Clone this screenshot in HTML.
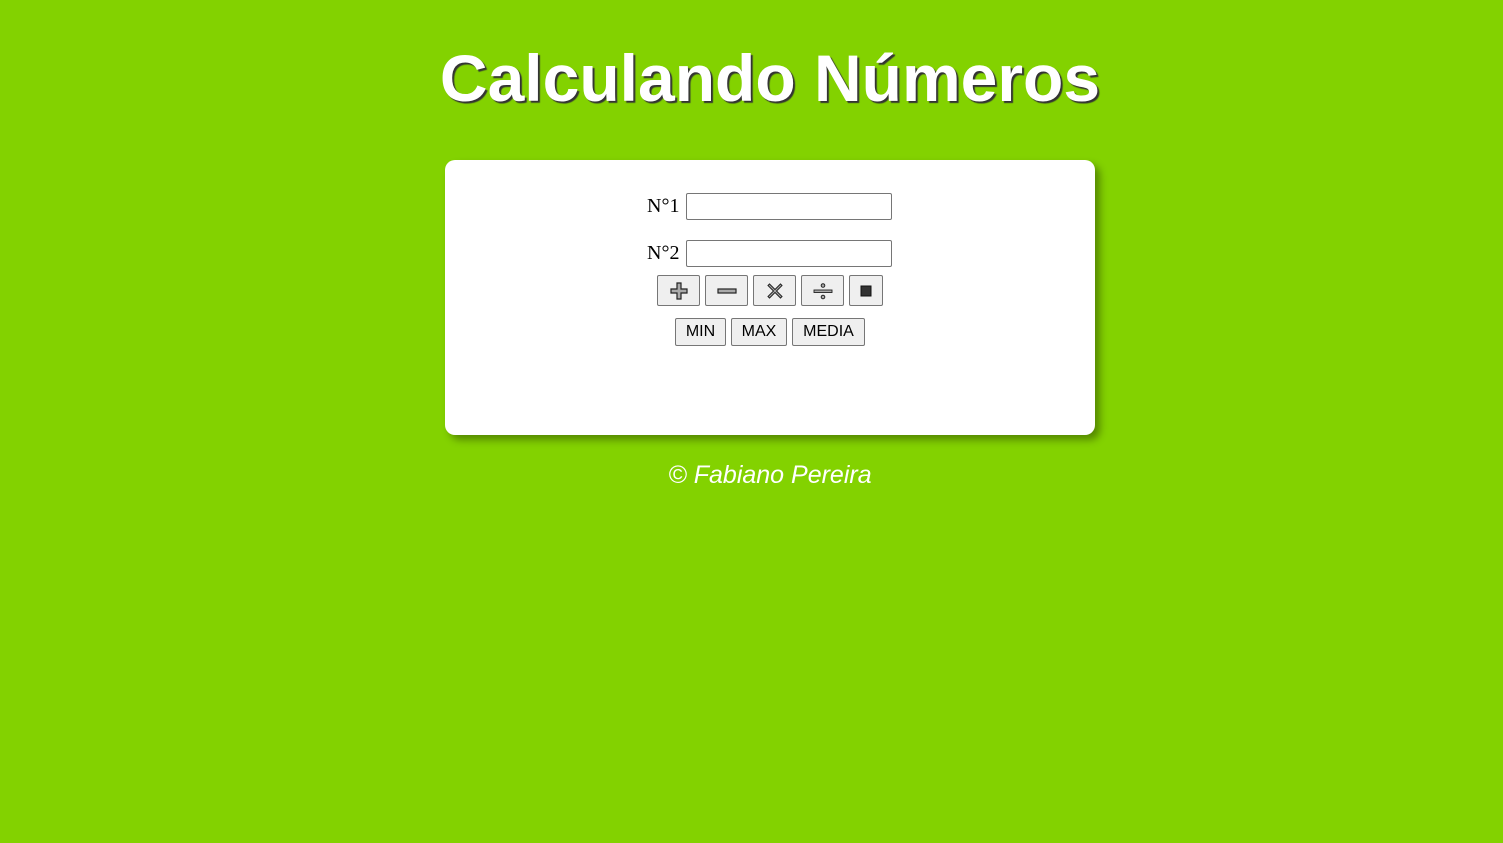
<!DOCTYPE html>
<html><head><meta charset="utf-8"><style>
body{margin:0;background:#83d200;width:1503px;height:843px;overflow:hidden;position:relative;font-family:"Liberation Sans",Arial,sans-serif}
h1{position:absolute;top:38px;left:0;width:1540px;margin:0;text-align:center;color:#fff;font-size:66px;font-weight:bold;text-shadow:2px 2px 1px #333;line-height:80px}
.card{position:absolute;left:445px;top:160px;width:650px;height:275px;background:#fff;border-radius:10px;box-shadow:5px 5px 8px rgba(0,0,0,.35)}
.lbl{position:absolute;font-family:"Liberation Serif",serif;font-size:20px;color:#000}
.inp{position:absolute;width:206px;height:27px;border:1px solid #767676;border-radius:2px;box-sizing:border-box;background:#fff}
.b{position:absolute;box-sizing:border-box;border:1px solid #767676;border-radius:2px;background:#efefef;font-size:16px;color:#000;text-align:center;display:flex;align-items:center;justify-content:center}
.foot{position:absolute;top:461px;left:0;width:1540px;text-align:center;color:#fff;font-style:italic;font-size:25px}
</style></head><body>
<h1>Calculando Números</h1>
<div class="card"></div>
<div class="lbl" style="left:647px;top:195px">N°1</div>
<div class="inp" style="left:686px;top:193px"></div>
<div class="lbl" style="left:647px;top:242px">N°2</div>
<div class="inp" style="left:686px;top:240px"></div>
<div class="b" style="left:657px;top:275px;width:43px;height:31px"><svg width="22" height="22" viewBox="0 0 22 22"><path d="M9 3h4v6h6v4h-6v6h-4v-6h-6v-4h6z" fill="#aaa" stroke="#222" stroke-width="1.2"/></svg></div>
<div class="b" style="left:705px;top:275px;width:43px;height:31px"><svg width="22" height="22" viewBox="0 0 22 22"><rect x="2" y="9" width="18" height="4" fill="#aaa" stroke="#222" stroke-width="1.2"/></svg></div>
<div class="b" style="left:753px;top:275px;width:43px;height:31px"><svg width="22" height="22" viewBox="0 0 22 22"><path d="M4 5.5l1.5-1.5 5.5 5.5 5.5-5.5 1.5 1.5-5.5 5.5 5.5 5.5-1.5 1.5-5.5-5.5-5.5 5.5-1.5-1.5 5.5-5.5z" fill="#aaa" stroke="#222" stroke-width="1"/></svg></div>
<div class="b" style="left:801px;top:275px;width:43px;height:31px"><svg width="22" height="22" viewBox="0 0 22 22"><rect x="2" y="10" width="18" height="2.5" fill="#aaa" stroke="#222" stroke-width="0.9"/><circle cx="11" cy="5.5" r="1.8" fill="#aaa" stroke="#222"/><circle cx="11" cy="17" r="1.8" fill="#aaa" stroke="#222"/></svg></div>
<div class="b" style="left:849px;top:275px;width:34px;height:31px"><svg width="12" height="12"><rect x="1" y="1" width="10" height="10" fill="#333" stroke="#111"/></svg></div>
<div class="b" style="left:675px;top:318px;width:51px;height:28px">MIN</div>
<div class="b" style="left:731px;top:318px;width:56px;height:28px">MAX</div>
<div class="b" style="left:792px;top:318px;width:73px;height:28px">MEDIA</div>
<div class="foot">© Fabiano Pereira</div>
</body></html>
